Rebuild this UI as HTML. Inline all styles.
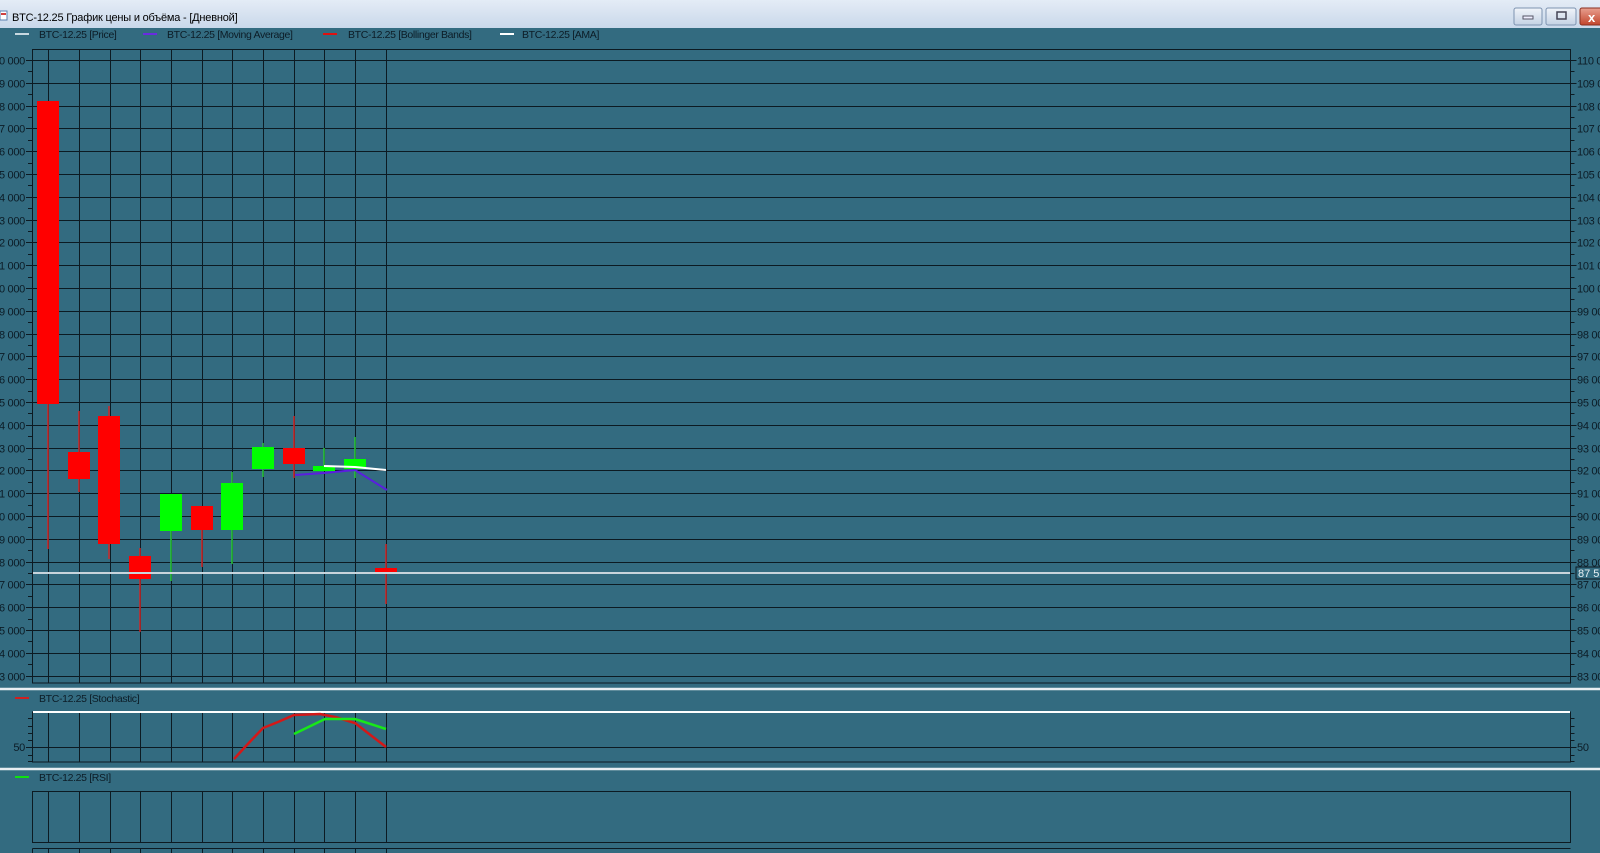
<!DOCTYPE html>
<html><head><meta charset="utf-8"><style>
html,body{margin:0;padding:0;width:1600px;height:853px;overflow:hidden;background:#336b80;}
svg{display:block;}
text{font-family:"Liberation Sans",sans-serif;}
</style></head><body>
<svg id="s" width="1600" height="853" xmlns="http://www.w3.org/2000/svg">
<defs>
<linearGradient id="tb" x1="0" y1="0" x2="0" y2="1"><stop offset="0" stop-color="#e4ecf6"/><stop offset="1" stop-color="#c9d8ea"/></linearGradient>
<linearGradient id="bt" x1="0" y1="0" x2="0" y2="1"><stop offset="0" stop-color="#f0f4fa"/><stop offset="1" stop-color="#c4d2e4"/></linearGradient>
<linearGradient id="bx" x1="0" y1="0" x2="0" y2="1"><stop offset="0" stop-color="#e8a090"/><stop offset="1" stop-color="#c2452c"/></linearGradient>
</defs>
<rect x="0" y="0" width="1600" height="853" fill="#336b80"/>
<rect x="0" y="0" width="1600" height="28" fill="url(#tb)"/>
<rect x="0" y="11" width="7" height="9" fill="#fff" stroke="#5a7fb0"/>
<rect x="1" y="13" width="5" height="2" fill="#d04040"/>
<text x="12" y="21" font-size="11" letter-spacing="-0.2" fill="#000">BTC-12.25 График цены и объёма - [Дневной]</text>
<rect x="1514" y="8" width="28" height="17" rx="2" fill="url(#bt)" stroke="#7d93b0"/>
<rect x="1523" y="16" width="10" height="3" fill="#eef" stroke="#556"/>
<rect x="1546" y="8" width="30" height="17" rx="2" fill="url(#bt)" stroke="#7d93b0"/>
<rect x="1557" y="12" width="9" height="7" fill="none" stroke="#445" stroke-width="1.5"/>
<rect x="1580" y="8" width="24" height="17" rx="2" fill="url(#bx)" stroke="#8a3020"/>
<text x="1588" y="22" font-size="13" font-weight="bold" fill="#fff">x</text>
<g font-size="10.5" letter-spacing="-0.35" fill="#0c1c26">
<line x1="15" y1="34" x2="29" y2="34" stroke="#c8d8e0" stroke-width="2"/><text x="39" y="38">BTC-12.25 [Price]</text>
<line x1="143" y1="34" x2="157" y2="34" stroke="#6a2be0" stroke-width="2"/><text x="167" y="38">BTC-12.25 [Moving Average]</text>
<line x1="323" y1="34" x2="337" y2="34" stroke="#e01010" stroke-width="2"/><text x="348" y="38">BTC-12.25 [Bollinger Bands]</text>
<line x1="500" y1="34" x2="514" y2="34" stroke="#ffffff" stroke-width="2"/><text x="522" y="38">BTC-12.25 [AMA]</text>
<line x1="15" y1="698" x2="29" y2="698" stroke="#d02020" stroke-width="2"/><text x="39" y="702">BTC-12.25 [Stochastic]</text>
<line x1="15" y1="777" x2="29" y2="777" stroke="#10e010" stroke-width="2"/><text x="39" y="781">BTC-12.25 [RSI]</text>
</g>
<g id="grid" stroke="#0c1a22" stroke-width="1" fill="none"></g>
<g id="lab" font-size="11" letter-spacing="-0.3" fill="#0c1c26"></g>
<line x1="0" y1="689" x2="1600" y2="689" stroke="#e8eef2" stroke-width="2.5"/>
<line x1="0" y1="769" x2="1600" y2="769" stroke="#e8eef2" stroke-width="2.5"/>
<line x1="33" y1="712" x2="1570" y2="712" stroke="#ffffff" stroke-width="2"/>
<g id="cand"></g>
<line x1="33" y1="573" x2="1570" y2="573" stroke="#c8d4dc" stroke-width="2"/>
<rect x="1576" y="567" width="26" height="12" fill="#336b80" stroke="#0c1a22"/>
<text x="1578" y="577" font-size="11" fill="#e8f0f4">87 5</text>
<polyline points="295,475 324,473 355,470 387,490" fill="none" stroke="#5a1ee0" stroke-width="2"/>
<polyline points="324,466 355,467 386,470" fill="none" stroke="#ffffff" stroke-width="2"/>
<polyline points="234,759 245,747 263,728 278,722 294,715 320,714 335,717 355,723 386,747" fill="none" stroke="#d41818" stroke-width="2.5"/>
<polyline points="294,734 325,719 355,719 386,729" fill="none" stroke="#18e818" stroke-width="2.5"/>
</svg>
<script>
var NS="http://www.w3.org/2000/svg";
function el(p,t,a,txt){var e=document.createElementNS(NS,t);for(var k in a)e.setAttribute(k,a[k]);if(txt)e.textContent=txt;document.getElementById(p).appendChild(e);return e;}
var L=32.5,R=1570.5;
el("grid","rect",{x:L,y:49.5,width:R-L,height:633.5});
el("grid","rect",{x:L,y:712,width:R-L,height:50});
el("grid","rect",{x:L,y:791.5,width:R-L,height:51});
el("grid","line",{x1:L,y1:848.5,x2:R,y2:848.5});
el("grid","line",{x1:L,y1:848.5,x2:L,y2:853});
var vx=[];for(var k=0;k<12;k++)vx.push(Math.round(48.3+30.67*k)+0.5);
vx.forEach(function(x){
 el("grid","line",{x1:x,y1:49.5,x2:x,y2:683});
 el("grid","line",{x1:x,y1:712,x2:x,y2:762});
 el("grid","line",{x1:x,y1:791.5,x2:x,y2:842.5});
 el("grid","line",{x1:x,y1:848.5,x2:x,y2:853});
});
function Y(p){return 60+(110000-p)/1000*22.8;}
for(var p=110000;p>=83000;p-=1000){
 var y=Math.round(Y(p))+0.5;
 el("grid","line",{x1:26,y1:y,x2:R+6,y2:y});
 var yh=Math.round(Y(p-500))+0.5;
 if(p>83000){el("grid","line",{x1:28,y1:yh,x2:L,y2:yh});el("grid","line",{x1:R,y1:yh,x2:R+4,y2:yh});}
 var s=String(p/1000)+" 000";
 el("lab","text",{x:25,y:y+4,"text-anchor":"end"},s);
 el("lab","text",{x:1577,y:y+4},s);
}
el("grid","line",{x1:26,y1:747.5,x2:R+6,y2:747.5});
[718,726,733,740,755,761].forEach(function(y){el("grid","line",{x1:28,y1:y+.5,x2:L,y2:y+.5});el("grid","line",{x1:R,y1:y+.5,x2:R+4,y2:y+.5});});
el("lab","text",{x:25,y:751,"text-anchor":"end"},"50");
el("lab","text",{x:1577,y:751},"50");
var R1="#ff0000",G1="#00ff00",RW="#d02828",GW="#28c838";
var C=[[37,101,404,101,549,0],[68,452,479,411,492,0],[98,416,544,406,559,0],[129,556,579,548,632,0],
[160,494,531,494,581,1],[191,506,530,506,567,0],[221,483,530,472,564,1],[252,447,469,443,477,1],
[283,448,464,416,478,0],[313,466,471,448,471,1],[344,459,469,437,478,1],[375,568,573,544,604,0]];
C.forEach(function(c){
 var cx=c[0]+11;
 el("cand","line",{x1:cx,y1:c[3],x2:cx,y2:c[4],stroke:c[5]?GW:RW,"stroke-width":1.5});
 el("cand","rect",{x:c[0],y:c[1],width:22,height:Math.max(c[2]-c[1],3),fill:c[5]?G1:R1});
});
</script>
</body></html>
